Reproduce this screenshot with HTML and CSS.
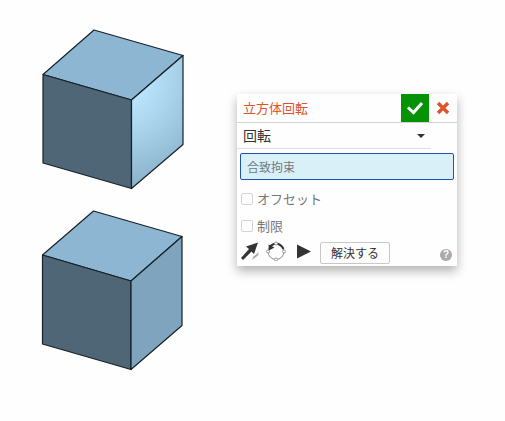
FILE: index.html
```html
<!DOCTYPE html>
<html lang="ja">
<head>
<meta charset="utf-8">
<title>立方体回転</title>
<link rel="stylesheet" href="styles.css">
</head>
<body>
<main class="workspace">
  <div class="model">
    <svg class="cube" viewBox="0 0 145 162" aria-hidden="true">
      <defs>
        <radialGradient id="shine" gradientUnits="userSpaceOnUse" cx="72" cy="48" r="112">
          <stop offset="0" stop-color="#bfe5ff"/>
          <stop offset=".3" stop-color="#b9e2fc"/>
          <stop offset=".55" stop-color="#a9d2eb"/>
          <stop offset=".8" stop-color="#97c0d9"/>
          <stop offset="1" stop-color="#8bb2cb"/>
        </radialGradient>
      </defs>
      <path class="top" d="M53 2 142 27.500 90.500 72 2 46.500Z"/>
      <path class="front" d="M2 46.500 90.500 72V160.500L2 135Z"/>
      <path class="lit" d="M90.500 72 142 27.500V116.500L90.500 160.500Z"/>
    </svg>
    <svg class="cube" viewBox="0 0 145 162" aria-hidden="true">
      <path class="top" d="M52.500 2 141 27.500 90 72 1.500 46Z"/>
      <path class="front" d="M1.500 46 90 72V160.500L1.500 135Z"/>
      <path class="side" d="M90 72 141 27.500V116.500L90 160.500Z"/>
    </svg>
  </div>
  <form class="dialog">
    <header class="head">
      <h1 class="title">立方体回転</h1>
      <button class="accept" type="button" aria-label="OK">
        <svg width="28" height="28" viewBox="0 0 28 28"><path d="m7 13.500 5.500 5L21 9" fill="none" stroke="#fff" stroke-width="3"/></svg>
      </button>
      <button class="cancel" type="button" aria-label="キャンセル">
        <svg width="28" height="28" viewBox="0 0 28 28"><path d="m9 9 10 10M19 9 9 19" fill="none" stroke="#e0522b" stroke-width="3.400"/></svg>
      </button>
    </header>
    <div class="kind">
      <select class="kind-select" aria-label="合致タイプ"><option>回転</option></select>
      <svg class="caret" width="8" height="4" viewBox="0 0 8 4" aria-hidden="true"><path d="M0 0h8L4 4Z" fill="#333"/></svg>
    </div>
    <input class="mate" type="text" placeholder="合致拘束" aria-label="合致拘束">
    <label class="check offset"><input type="checkbox">オフセット</label>
    <label class="check"><input type="checkbox">制限</label>
    <footer class="foot">
      <button class="tool" type="button" aria-label="軸を反転">
        <svg width="20" height="20" viewBox="0 0 20 20"><path d="M18 1.500 14 13 11.500 10.500 3 19 1 17 9 8 6 5.500Z" fill="#333"/><path d="M19 11 18 14.500 14 17.500 12 19 13.500 15.500Z" fill="#aaa"/></svg>
      </button>
      <button class="tool" type="button" aria-label="二次軸の向き">
        <svg width="20" height="20" viewBox="0 0 20 20"><circle cx="10" cy="10.500" r="8" fill="none" stroke="#888"/><path d="M10 2.500Q6 2.800 4 6M10 2.500Q15 3 17.500 8" fill="none" stroke="#333" stroke-width="2"/><path d="M2.500 3.500 3 9.500l5.500-3Z" fill="#333"/><g fill="#fff" stroke="#999"><circle cx="10" cy="2.500" r="1.500"/><circle cx="2" cy="10.500" r="1.500"/><circle cx="18" cy="10.500" r="1.500"/><circle cx="10" cy="18.500" r="1.500"/></g></svg>
      </button>
      <button class="tool" type="button" aria-label="アニメーション">
        <svg width="20" height="20" viewBox="0 0 20 20"><path d="M5 3.500 19 10.500 5 17.500Z" fill="#333"/></svg>
      </button>
      <button class="solve" type="button">解決する</button>
      <button class="help" type="button" aria-label="ヘルプ">?</button>
    </footer>
  </form>
</main>
</body>
</html>
```
FILE: styles.css
```css
* { box-sizing: border-box; }
body {
  margin: 0;
  background: #fefefe;
  color: #333;
  font: 13px/20px "Noto Sans CJK JP", sans-serif;
}
button, select, input { font: inherit; color: inherit; margin: 0; }
button { padding: 0; border: 0; background: none; }
svg { display: block; }
.workspace {
  display: flex;
  align-items: flex-start;
  padding: 28px 48px 28px 41px;
}
.model {
  flex: none;
  display: grid;
  gap: 19px;
  margin-right: 51px;
}
.cube { width: 145px; }
.cube path { stroke: #172127; stroke-width: 1.2; stroke-linejoin: round; }
.cube .top { fill: #8cb6d2; }
.cube .front { fill: #4e6675; }
.cube .side { fill: #7fa5be; }
.cube .lit { fill: url(#shine); }
.dialog {
  flex: 1;
  display: flex;
  flex-direction: column;
  margin-top: 66px;
  background: #fefefe;
  box-shadow: 0 5px 10px rgba(0, 0, 0, .3);
}
.head { display: flex; border-bottom: 1px solid #d2d2d2; }
.title {
  flex: 1;
  margin: 0;
  padding-left: 6px;
  font-size: 13px;
  line-height: 28px;
  font-weight: 400;
  color: #e0522b;
}
.accept { background: #059305; }
.kind {
  display: flex;
  align-items: center;
  margin-right: 26px;
  padding-right: 6px;
  border-bottom: 1px solid #ddd;
}
.kind-select {
  flex: 1;
  height: 25px;
  padding: 0 0 2px 6px;
  border: 0;
  background: none;
  appearance: none;
  font-size: 14px;
}
.mate {
  height: 27px;
  margin: 4px 3px 9px;
  padding: 0 6px;
  border: 1px solid #1c55aa;
  border-radius: 2px;
  background: #daf0f9;
  font-size: 12px;
}
.mate::placeholder { color: #707b80; opacity: 1; }
.check {
  display: flex;
  align-items: center;
  gap: 4px;
  padding-left: 4px;
  color: #777;
}
.offset { margin-bottom: 7px; }
.check input {
  appearance: none;
  width: 12px;
  height: 12px;
  border: 1px solid #d5d5d5;
  border-radius: 2px;
  background: #fefefe;
}
.foot {
  display: flex;
  align-items: flex-start;
  gap: 6px;
  padding: 5px 5px 2px 3px;
}
.solve {
  height: 22px;
  padding: 0 10px;
  margin-top: 1px;
  margin-left: 2px;
  border: 1px solid #c8c8c8;
  border-radius: 2px;
  font-size: 12px;
  line-height: 20px;
}
.help {
  align-self: flex-end;
  width: 12px;
  height: 12px;
  margin: 0 0 3px auto;
  border-radius: 50%;
  background: #aaa;
  color: #fff;
  font: bold 10px/12px "Liberation Sans", sans-serif;
}
```
